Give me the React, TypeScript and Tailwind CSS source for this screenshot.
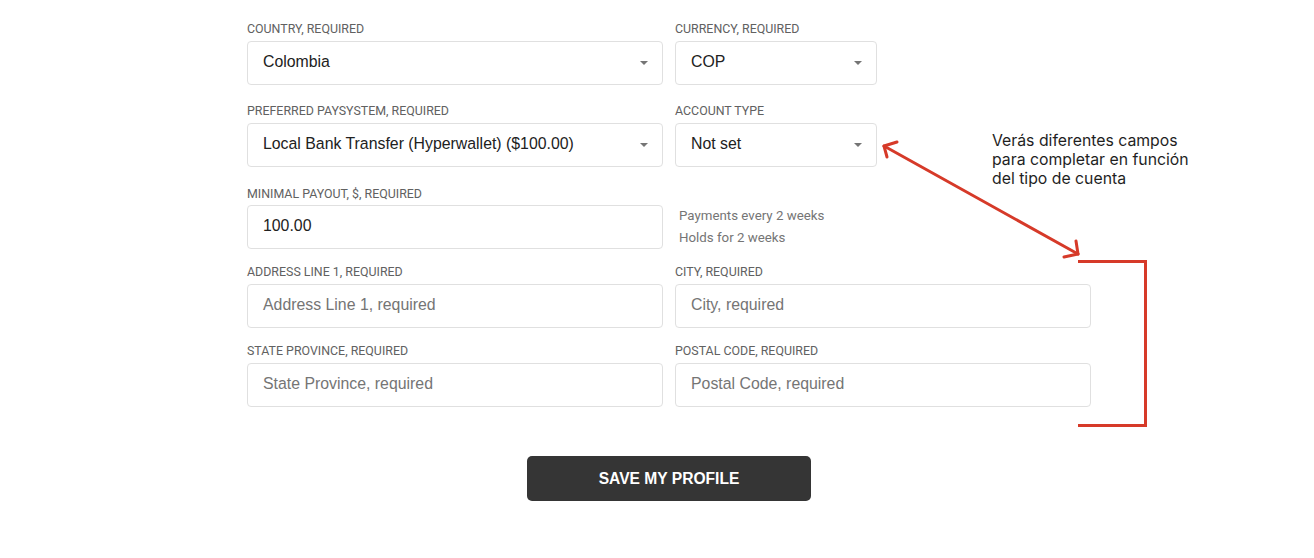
import { ReactNode } from 'react';

const labelCls = "block text-[12.4px] leading-4 uppercase text-[#616161] mb-[4px] font-['Roboto',sans-serif]";
const boxCls = "h-[44px] border border-[#e0e0e0] rounded-[4px] bg-white flex items-center pl-[15px] pr-[14px] pb-[3px] text-[15.85px] font-['Liberation_Sans',Arial,sans-serif]";

function Caret() {
  return (
    <svg width="8" height="4" viewBox="0 0 8 4" className="shrink-0 mt-[2px]">
      <path d="M0 0 L8 0 L4 4 Z" fill="#757575" />
    </svg>
  );
}

function Field({ label, children }: { label: string; children: ReactNode }) {
  return (
    <div>
      <label className={labelCls}>{label}</label>
      {children}
    </div>
  );
}

function Select({ value, className = '' }: { value: string; className?: string }) {
  return (
    <div className={`${boxCls} justify-between text-[#212121] ${className}`}>
      <span>{value}</span>
      <Caret />
    </div>
  );
}

function Input({ value, placeholder }: { value?: string; placeholder?: string }) {
  return (
    <div className={boxCls}>
      {value ? (
        <span className="text-[#212121]">{value}</span>
      ) : (
        <span className="text-[#757575]">{placeholder}</span>
      )}
    </div>
  );
}

export default function App() {
  return (
    <div className="relative w-[1314px] h-[558px] bg-white overflow-hidden">
      <div className="pl-[247px] pt-[21px] w-[1091px]">
        <div className="grid grid-cols-[416px_416px] gap-x-[12px]">
          <Field label="Country, required">
            <Select value="Colombia" />
          </Field>
          <Field label="Currency, required">
            <Select value="COP" className="w-[202px]" />
          </Field>
        </div>

        <div className="grid grid-cols-[416px_416px] gap-x-[12px] mt-[18px]">
          <Field label="Preferred paysystem, required">
            <Select value="Local Bank Transfer (Hyperwallet) ($100.00)" />
          </Field>
          <Field label="Account type">
            <Select value="Not set" className="w-[202px]" />
          </Field>
        </div>

        <div className="grid grid-cols-[416px_416px] gap-x-[12px] mt-[19px]">
          <Field label="Minimal payout, $, required">
            <div className="-mt-px">
              <Input value="100.00" />
            </div>
          </Field>
          <div className="pt-[19px] pl-[4px] text-[13.3px] leading-[22px] text-[#757575] font-['Roboto',sans-serif]">
            <div>Payments every 2 weeks</div>
            <div>Holds for 2 weeks</div>
          </div>
        </div>

        <div className="grid grid-cols-[416px_416px] gap-x-[12px] mt-[15px]">
          <Field label="Address line 1, required">
            <Input placeholder="Address Line 1, required" />
          </Field>
          <Field label="City, required">
            <Input placeholder="City, required" />
          </Field>
        </div>

        <div className="grid grid-cols-[416px_416px] gap-x-[12px] mt-[15px]">
          <Field label="State province, required">
            <Input placeholder="State Province, required" />
          </Field>
          <Field label="Postal code, required">
            <Input placeholder="Postal Code, required" />
          </Field>
        </div>

        <div className="flex justify-center mt-[49px]">
          <button className="w-[284px] h-[45px] bg-[#353535] rounded-[5px] text-white font-bold text-[15.6px] uppercase font-['Liberation_Sans',Arial,sans-serif]">
            Save my profile
          </button>
        </div>
      </div>

      {/* annotation */}
      <div className="absolute left-[992px] top-[131px] text-[15.8px] leading-[19px] text-[#1f1f1f] font-['Inter',sans-serif]">
        Verás diferentes campos
        <br />
        para completar en función
        <br />
        del tipo de cuenta
      </div>
      <svg className="absolute inset-0 pointer-events-none" width="1314" height="558">
        <g stroke="#d63a29" strokeWidth="3" fill="none" strokeLinecap="round" strokeLinejoin="round">
          <path d="M884 146 L1078 254" />
          <path d="M897 142 L884 146 L887 157" />
          <path d="M1076 241 L1078 254 L1064 257" />
        </g>
        <path d="M1078 261.5 H1145.5 V425.5 H1078" stroke="#d63a29" strokeWidth="3" fill="none" />
      </svg>
    </div>
  );
}
